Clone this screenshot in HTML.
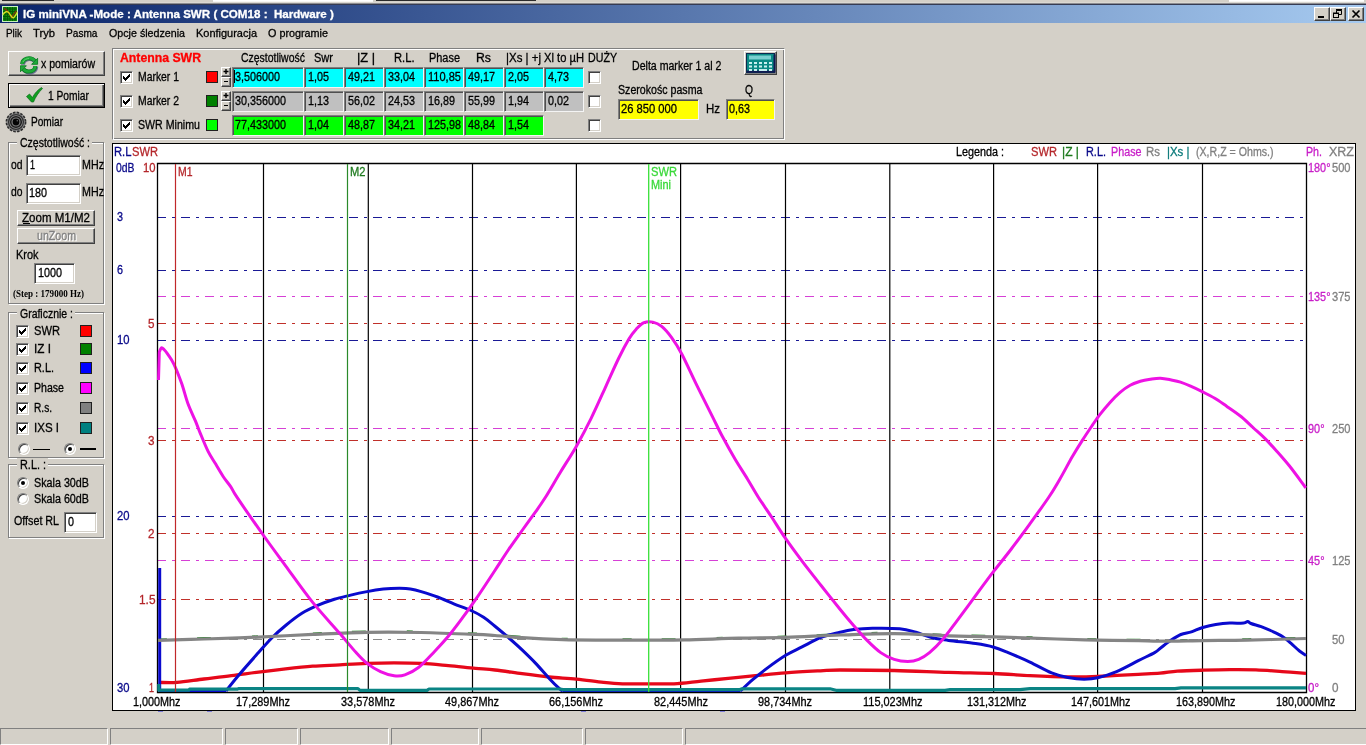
<!DOCTYPE html>
<html lang="pl"><head><meta charset="utf-8"><title>IG miniVNA -Mode : Antenna SWR</title>
<style>
*{box-sizing:border-box;margin:0;padding:0}
html,body{width:1366px;height:745px;overflow:hidden;background:#d4d0c8}
body{font-family:"Liberation Sans",sans-serif;font-size:12.5px;position:relative}
#app{position:absolute;left:0;top:0;width:1366px;height:745px;background:#d4d0c8;overflow:hidden;will-change:transform}
#app div,#app span,#app svg{position:absolute}
.t{white-space:pre;transform-origin:0 50%;display:block;-webkit-text-stroke:.3px}
.b{font-weight:bold}
.sf{font-family:"Liberation Serif",serif}
.title{left:0;top:5px;width:1366px;height:18px;background:linear-gradient(90deg,#0a246a,#a6caf0)}
.cap{background:#d4d0c8;border:1px solid;border-color:#fff #404040 #404040 #fff;box-shadow:inset -1px -1px 0 #808080}
.btn{background:#d4d0c8;border:1px solid;border-color:#fff #404040 #404040 #fff;box-shadow:inset -1px -1px 0 #808080,inset 1px 1px 0 #d4d0c8}
.btnd{background:#d4d0c8;border:1px solid #000;box-shadow:inset 1px 1px 0 #fff,inset -1px -1px 0 #404040,inset -2px -2px 0 #808080}
.sunk{border:1px solid;border-color:#808080 #fff #fff #808080;box-shadow:inset 1px 1px 0 #404040,inset -1px -1px 0 #d4d0c8}
.fld{border:1px solid;border-color:#808080 #f4f4f4 #f4f4f4 #808080;box-shadow:inset 1px 1px 0 #505050}
.grp{border:1px solid #808080;box-shadow:1px 1px 0 #fff,inset 1px 1px 0 #fff}
.etch{border:1px solid;border-color:#808080 #fff #fff #808080;box-shadow:inset 1px 1px 0 #fff,inset -1px -1px 0 #808080}
.glab{background:#d4d0c8;height:12px}
.sq{border:1px solid #202020}
.chk{background:#fff;border:1px solid;border-color:#808080 #fff #fff #808080;box-shadow:inset 1px 1px 0 #404040,inset -1px -1px 0 #d4d0c8}
.rad{border-radius:50%;background:#fff;border:1px solid;border-color:#808080 #fff #fff #808080;box-shadow:inset 1px 1px 0 #404040,inset -1px -1px 0 #d4d0c8}
.dot{border-radius:50%;background:#000}
.sb{border:1px solid;border-color:#808080 #fff #fff #808080}
</style></head>
<body><div id="app">
<div class="" style="left:2px;top:0px;width:52px;height:1px;background:#2b2b2b"></div>
<div class="" style="left:213px;top:0px;width:160px;height:2px;background:linear-gradient(#fff 60%,#e8e6e0)"></div>
<div class="" style="left:376px;top:0px;width:160px;height:1px;background:#2b2b2b"></div>
<div class="" style="left:1229px;top:0px;width:135px;height:2px;background:linear-gradient(#fff 60%,#e8e6e0)"></div>
<div class="" style="left:0px;top:2px;width:1366px;height:1px;background:#dbd8d2"></div>
<div class="" style="left:0px;top:3px;width:1366px;height:1px;background:#8c8c90"></div>
<div class="" style="left:0px;top:4px;width:1366px;height:1px;background:#363b52"></div>
<div class="title"><svg style="left:2px;top:1px" width="16" height="16" viewBox="0 0 16 16"><rect width="16" height="16" fill="#109410"/><path d="M3 1v14M5.500 1v14M8 1v14M10.500 1v14M13 1v14M1 3h14M1 5.500h14M1 8h14M1 10.500h14M1 13h14" stroke="#045a04" stroke-width="1.100"/><rect x=".5" y=".5" width="15" height="15" fill="none" stroke="#c8f0c0"/><path d="M2 2.500C5 3.500 7.500 7.500 9.500 11.500C11 9 12.500 6.500 14.500 5" fill="none" stroke="#7a3a0a" stroke-width="1.500"/><path d="M.8 8.800C2.500 5.500 5.500 4.300 7.500 7.500S10 12.200 11.500 11.800S14.500 7 15.500 6.200" fill="none" stroke="#d8e020" stroke-width="1.400"/></svg></div>
<span class="t b" style="left:22.5px;top:7.02px;font-size:11.5px;line-height:14px;color:#fff;transform:scaleX(1.008);">IG miniVNA -Mode : Antenna SWR ( COM18 :  Hardware )</span>
<div class="cap" style="left:1314px;top:7px;width:16px;height:14px;"><svg width="14" height="12" style="left:0;top:0"><rect x="3" y="8" width="6" height="2" fill="#000"/></svg></div>
<div class="cap" style="left:1330px;top:7px;width:16px;height:14px;"><svg width="14" height="12" style="left:0;top:0"><path d="M5.5 2.5h5v4h-5zM5 2h6" fill="none" stroke="#000" stroke-width="1"/><path d="M5 1.5h6" stroke="#000" stroke-width="1"/><rect x="2.500" y="5.500" width="5" height="4" fill="#d4d0c8" stroke="#000"/><path d="M2 5h6" stroke="#000"/></svg></div>
<div class="cap" style="left:1348px;top:7px;width:16px;height:14px;"><svg width="14" height="12" style="left:0;top:0"><path d="M3.500 2.500l7 7M10.500 2.500l-7 7" stroke="#000" stroke-width="1.700"/></svg></div>
<span class="t" style="left:5.5px;top:26.02px;font-size:11.5px;line-height:14px;color:#000;transform:scaleX(0.863);">Plik</span>
<span class="t" style="left:32.5px;top:26.02px;font-size:11.5px;line-height:14px;color:#000;transform:scaleX(0.974);">Tryb</span>
<span class="t" style="left:66.0px;top:26.02px;font-size:11.5px;line-height:14px;color:#000;transform:scaleX(0.880);">Pasma</span>
<span class="t" style="left:108.5px;top:26.02px;font-size:11.5px;line-height:14px;color:#000;transform:scaleX(0.929);">Opcje śledzenia</span>
<span class="t" style="left:195.5px;top:26.02px;font-size:11.5px;line-height:14px;color:#000;transform:scaleX(0.954);">Konfiguracja</span>
<span class="t" style="left:267.5px;top:26.02px;font-size:11.5px;line-height:14px;color:#000;transform:scaleX(0.939);">O programie</span>
<div class="btn" style="left:8px;top:51px;width:97px;height:25px;"></div>
<svg style="left:19.500px;top:55.500px" width="19" height="19" viewBox="0 0 19 19"><g fill="none" stroke-linecap="butt" stroke-linejoin="round"><g transform="translate(.8 .8)" stroke="#1a2a6a" opacity=".55" stroke-width="4.200"><path d="M2.200 8C2.200 3.800 6 2.200 9 2.200C11.500 2.200 13.500 3.200 14.500 4.800"/><path d="M15.300 10C15.300 14.200 11.500 15.500 8.800 15.500C6.300 15.500 4.400 14.600 3.300 13"/></g><path d="M2.200 8C2.200 3.800 6 2.200 9 2.200C11.500 2.200 13.500 3.200 14.500 4.800" stroke="#0c7a22" stroke-width="4"/><path d="M15.300 10C15.300 14.200 11.500 15.500 8.800 15.500C6.300 15.500 4.400 14.600 3.300 13" stroke="#0c7a22" stroke-width="4"/><path d="M2.200 8C2.200 3.800 6 2.200 9 2.200C11.500 2.200 13.500 3.200 14.500 4.800" stroke="#1eaa3a" stroke-width="2.700"/><path d="M15.300 10C15.300 14.200 11.500 15.500 8.800 15.500C6.300 15.500 4.400 14.600 3.300 13" stroke="#1eaa3a" stroke-width="2.700"/></g><path d="M17.600 2.300v6h-6z" fill="#1eaa3a" stroke="#0c7a22" stroke-width=".9"/><path d="M.4 15.800v-6h6z" fill="#1eaa3a" stroke="#0c7a22" stroke-width=".9"/><path d="M3 6C3.800 3.600 6.500 2.600 9 2.600" fill="none" stroke="#5ad86a" stroke-width="1"/></svg>
<span class="t" style="left:41.0px;top:56.67px;font-size:12.5px;line-height:14px;color:#000;transform:scaleX(0.845);">x pomiarów</span>
<div class="btnd" style="left:8px;top:83px;width:97px;height:25px;"></div>
<svg style="left:25px;top:86px" width="20" height="18" viewBox="0 0 20 18"><path d="M1.500 10.500l3-2.500 3 3.500c2-4 5-7.500 9-10l1 1c-4 4-7 8.500-9 13.500h-2z" fill="#10a020" stroke="#0a6a18" stroke-width=".7"/></svg>
<span class="t" style="left:47.5px;top:88.67px;font-size:12.5px;line-height:14px;color:#000;transform:scaleX(0.819);">1 Pomiar</span>
<svg style="left:5px;top:111px" width="22" height="22" viewBox="0 0 22 22"><circle cx="11" cy="11" r="9.600" fill="#8c8c8c" stroke="#2c2c2c" stroke-width="1.600" stroke-dasharray="2.600 1.200"/><circle cx="11" cy="11" r="7.400" fill="#909090" stroke="#303030" stroke-width="1.300"/><circle cx="11" cy="11" r="5.300" fill="#808080" stroke="#1c1c1c" stroke-width="1.500"/><circle cx="11" cy="11" r="3.400" fill="#050505"/><circle cx="12.300" cy="9.800" r=".8" fill="#666"/></svg>
<span class="t" style="left:30.5px;top:114.67px;font-size:12.5px;line-height:14px;color:#000;transform:scaleX(0.808);">Pomiar</span>
<div class="grp" style="left:8px;top:142px;width:96px;height:162px;"></div><div class="glab" style="left:17px;top:136px;width:75px;height:12px;"></div><span class="t" style="left:19.5px;top:135.67px;font-size:12.5px;line-height:14px;color:#000;transform:scaleX(0.840);">Częstotliwość :</span>
<span class="t" style="left:10.8px;top:157.67px;font-size:12.5px;line-height:14px;color:#000;transform:scaleX(0.827);">od</span>
<div class="sunk" style="left:26px;top:155px;width:55px;height:21px;background:#fff"></div>
<span class="t" style="left:29.5px;top:158.17px;font-size:12.5px;line-height:14px;color:#000;transform:scaleX(0.719);">1</span>
<span class="t" style="left:81.5px;top:157.67px;font-size:12.5px;line-height:14px;color:#000;transform:scaleX(0.856);">MHz</span>
<span class="t" style="left:10.8px;top:185.17px;font-size:12.5px;line-height:14px;color:#000;transform:scaleX(0.827);">do</span>
<div class="sunk" style="left:26px;top:183px;width:55px;height:21px;background:#fff"></div>
<span class="t" style="left:28.5px;top:185.67px;font-size:12.5px;line-height:14px;color:#000;transform:scaleX(0.863);">180</span>
<span class="t" style="left:81.5px;top:185.17px;font-size:12.5px;line-height:14px;color:#000;transform:scaleX(0.856);">MHz</span>
<div class="btn" style="left:17px;top:210px;width:78px;height:16px;"></div>
<span class="t" style="left:22.0px;top:211.17px;font-size:12.5px;line-height:14px;color:#000;transform:scaleX(0.923);">Zoom M1/M2</span>
<div class="" style="left:23px;top:223px;width:7px;height:1px;background:#000"></div>
<div class="btn" style="left:17px;top:228px;width:78px;height:16px;"></div>
<span class="t" style="left:37.5px;top:229.67px;font-size:12.5px;line-height:14px;color:#fff;transform:scaleX(0.850);">unZoom</span>
<span class="t" style="left:36.5px;top:228.67px;font-size:12.5px;line-height:14px;color:#808080;transform:scaleX(0.850);">unZoom</span>
<span class="t" style="left:16.0px;top:248.17px;font-size:12.5px;line-height:14px;color:#000;transform:scaleX(0.875);">Krok</span>
<div class="sunk" style="left:34px;top:263px;width:41px;height:21px;background:#fff"></div>
<span class="t" style="left:37.5px;top:265.67px;font-size:12.5px;line-height:14px;color:#000;transform:scaleX(0.863);">1000</span>
<span class="t b sf" style="left:12.5px;top:287.62px;font-size:10px;line-height:12px;color:#000;transform:scaleX(0.903);-webkit-text-stroke:0;">(Step : 179000 Hz)</span>
<div class="grp" style="left:8px;top:312px;width:96px;height:146px;"></div><div class="glab" style="left:17px;top:306px;width:58px;height:12px;"></div><span class="t" style="left:19.5px;top:306.67px;font-size:12.5px;line-height:14px;color:#000;transform:scaleX(0.838);">Graficznie :</span>
<div class="chk" style="left:16px;top:325px;width:13px;height:13px;"><svg width="13" height="13" style="left:-1px;top:-1px" shape-rendering="crispEdges"><path d="M3 5h1v3h-1zM4 6h1v3h-1zM5 7h1v3h-1zM6 6h1v3h-1zM7 5h1v3h-1zM8 4h1v3h-1zM9 3h1v3h-1z" fill="#000"/></svg></div>
<span class="t" style="left:34.0px;top:324.17px;font-size:12.5px;line-height:14px;color:#000;transform:scaleX(0.891);">SWR</span>
<div class="sq" style="left:80px;top:325px;width:12px;height:12px;background:#ff0000"></div>
<div class="chk" style="left:16px;top:342.5px;width:13px;height:13px;"><svg width="13" height="13" style="left:-1px;top:-1px" shape-rendering="crispEdges"><path d="M3 5h1v3h-1zM4 6h1v3h-1zM5 7h1v3h-1zM6 6h1v3h-1zM7 5h1v3h-1zM8 4h1v3h-1zM9 3h1v3h-1z" fill="#000"/></svg></div>
<span class="t" style="left:34.0px;top:341.67px;font-size:12.5px;line-height:14px;color:#000;transform:scaleX(0.941);">IZ I</span>
<div class="sq" style="left:80px;top:342.5px;width:12px;height:12px;background:#008000"></div>
<div class="chk" style="left:16px;top:362px;width:13px;height:13px;"><svg width="13" height="13" style="left:-1px;top:-1px" shape-rendering="crispEdges"><path d="M3 5h1v3h-1zM4 6h1v3h-1zM5 7h1v3h-1zM6 6h1v3h-1zM7 5h1v3h-1zM8 4h1v3h-1zM9 3h1v3h-1z" fill="#000"/></svg></div>
<span class="t" style="left:34.0px;top:361.17px;font-size:12.5px;line-height:14px;color:#000;transform:scaleX(0.872);">R.L.</span>
<div class="sq" style="left:80px;top:362px;width:12px;height:12px;background:#0000ff"></div>
<div class="chk" style="left:16px;top:382px;width:13px;height:13px;"><svg width="13" height="13" style="left:-1px;top:-1px" shape-rendering="crispEdges"><path d="M3 5h1v3h-1zM4 6h1v3h-1zM5 7h1v3h-1zM6 6h1v3h-1zM7 5h1v3h-1zM8 4h1v3h-1zM9 3h1v3h-1z" fill="#000"/></svg></div>
<span class="t" style="left:34.0px;top:381.17px;font-size:12.5px;line-height:14px;color:#000;transform:scaleX(0.846);">Phase</span>
<div class="sq" style="left:80px;top:382px;width:12px;height:12px;background:#ff00ff"></div>
<div class="chk" style="left:16px;top:402px;width:13px;height:13px;"><svg width="13" height="13" style="left:-1px;top:-1px" shape-rendering="crispEdges"><path d="M3 5h1v3h-1zM4 6h1v3h-1zM5 7h1v3h-1zM6 6h1v3h-1zM7 5h1v3h-1zM8 4h1v3h-1zM9 3h1v3h-1z" fill="#000"/></svg></div>
<span class="t" style="left:34.0px;top:401.17px;font-size:12.5px;line-height:14px;color:#000;transform:scaleX(0.810);">R.s.</span>
<div class="sq" style="left:80px;top:402px;width:12px;height:12px;background:#808080"></div>
<div class="chk" style="left:16px;top:422px;width:13px;height:13px;"><svg width="13" height="13" style="left:-1px;top:-1px" shape-rendering="crispEdges"><path d="M3 5h1v3h-1zM4 6h1v3h-1zM5 7h1v3h-1zM6 6h1v3h-1zM7 5h1v3h-1zM8 4h1v3h-1zM9 3h1v3h-1z" fill="#000"/></svg></div>
<span class="t" style="left:34.0px;top:421.17px;font-size:12.5px;line-height:14px;color:#000;transform:scaleX(0.923);">IXS I</span>
<div class="sq" style="left:80px;top:422px;width:12px;height:12px;background:#008080"></div>
<div class="rad" style="left:18px;top:443px;width:12px;height:12px;"></div>
<div class="" style="left:33px;top:448.5px;width:17px;height:1px;background:#000"></div>
<div class="rad" style="left:64px;top:443px;width:12px;height:12px;"><div class="dot" style="left:3px;top:3px;width:4px;height:4px"></div></div>
<div class="" style="left:80px;top:448px;width:16px;height:2px;background:#000"></div>
<div class="grp" style="left:8px;top:464px;width:96px;height:74px;"></div><div class="glab" style="left:17px;top:458px;width:31px;height:12px;"></div><span class="t" style="left:19.5px;top:458.17px;font-size:12.5px;line-height:14px;color:#000;transform:scaleX(0.870);">R.L. :</span>
<div class="rad" style="left:17px;top:477px;width:12px;height:12px;"><div class="dot" style="left:3px;top:3px;width:4px;height:4px"></div></div>
<span class="t" style="left:34.0px;top:476.17px;font-size:12.5px;line-height:14px;color:#000;transform:scaleX(0.860);">Skala 30dB</span>
<div class="rad" style="left:17px;top:493px;width:12px;height:12px;"></div>
<span class="t" style="left:34.0px;top:492.17px;font-size:12.5px;line-height:14px;color:#000;transform:scaleX(0.860);">Skala 60dB</span>
<span class="t" style="left:13.5px;top:514.17px;font-size:12.5px;line-height:14px;color:#000;transform:scaleX(0.856);">Offset RL</span>
<div class="sunk" style="left:64px;top:512px;width:33px;height:21px;background:#fff"></div>
<span class="t" style="left:67.5px;top:515.17px;font-size:12.5px;line-height:14px;color:#000;transform:scaleX(0.863);">0</span>
<div class="etch" style="left:112px;top:48px;width:673px;height:92px;"></div>
<span class="t b" style="left:119.5px;top:50.84px;font-size:12px;line-height:14px;color:#ff0000;transform:scaleX(1.021);">Antenna SWR</span>
<span class="t" style="left:240.5px;top:50.67px;font-size:12.5px;line-height:14px;color:#000;transform:scaleX(0.837);">Częstotliwość</span>
<span class="t" style="left:313.5px;top:50.67px;font-size:12.5px;line-height:14px;color:#000;transform:scaleX(0.882);">Swr</span>
<span class="t" style="left:356.5px;top:50.67px;font-size:12.5px;line-height:14px;color:#000;transform:scaleX(1.022);">|Z |</span>
<span class="t" style="left:393.5px;top:50.67px;font-size:12.5px;line-height:14px;color:#000;transform:scaleX(0.894);">R.L.</span>
<span class="t" style="left:429.0px;top:50.67px;font-size:12.5px;line-height:14px;color:#000;transform:scaleX(0.874);">Phase</span>
<span class="t" style="left:475.5px;top:50.67px;font-size:12.5px;line-height:14px;color:#000;transform:scaleX(0.982);">Rs</span>
<span class="t" style="left:505.5px;top:50.67px;font-size:12.5px;line-height:14px;color:#000;transform:scaleX(0.918);">|Xs | +j</span>
<span class="t" style="left:543.5px;top:50.67px;font-size:12.5px;line-height:14px;color:#000;transform:scaleX(0.894);">Xl to µH</span>
<span class="t" style="left:587.5px;top:50.67px;font-size:12.5px;line-height:14px;color:#000;transform:scaleX(0.852);">DUŻY</span>
<div class="chk" style="left:120px;top:71px;width:13px;height:13px;"><svg width="13" height="13" style="left:-1px;top:-1px" shape-rendering="crispEdges"><path d="M3 5h1v3h-1zM4 6h1v3h-1zM5 7h1v3h-1zM6 6h1v3h-1zM7 5h1v3h-1zM8 4h1v3h-1zM9 3h1v3h-1z" fill="#000"/></svg></div>
<span class="t" style="left:138.0px;top:69.67px;font-size:12.5px;line-height:14px;color:#000;transform:scaleX(0.831);">Marker 1</span>
<div class="sq" style="left:206px;top:71px;width:12px;height:12px;background:#ff0000"></div>
<div class="btn" style="left:221px;top:67px;width:10px;height:10px;"><svg width="8" height="8" style="left:0;top:0"><path d="M1.500 3.500h5M4 1v5" stroke="#000" stroke-width="1.400"/></svg></div>
<div class="btn" style="left:221px;top:77px;width:10px;height:10px;"><svg width="8" height="8" style="left:0;top:0"><path d="M2 3.500h4" stroke="#000" stroke-width="1"/></svg></div>
<div class="fld" style="left:232px;top:67px;width:72px;height:21px;background:#00ffff"></div>
<span class="t" style="left:234.5px;top:69.67px;font-size:12.5px;line-height:14px;color:#000;transform:scaleX(0.863);">3,506000</span>
<div class="fld" style="left:304px;top:67px;width:40px;height:21px;background:#00ffff"></div>
<span class="t" style="left:307.5px;top:69.67px;font-size:12.5px;line-height:14px;color:#000;transform:scaleX(0.863);">1,05</span>
<div class="fld" style="left:344px;top:67px;width:40px;height:21px;background:#00ffff"></div>
<span class="t" style="left:347.5px;top:69.67px;font-size:12.5px;line-height:14px;color:#000;transform:scaleX(0.863);">49,21</span>
<div class="fld" style="left:384px;top:67px;width:40px;height:21px;background:#00ffff"></div>
<span class="t" style="left:387.5px;top:69.67px;font-size:12.5px;line-height:14px;color:#000;transform:scaleX(0.863);">33,04</span>
<div class="fld" style="left:424px;top:67px;width:40px;height:21px;background:#00ffff"></div>
<span class="t" style="left:427.5px;top:69.67px;font-size:12.5px;line-height:14px;color:#000;transform:scaleX(0.884);">110,85</span>
<div class="fld" style="left:464px;top:67px;width:40px;height:21px;background:#00ffff"></div>
<span class="t" style="left:467.5px;top:69.67px;font-size:12.5px;line-height:14px;color:#000;transform:scaleX(0.863);">49,17</span>
<div class="fld" style="left:504px;top:67px;width:40px;height:21px;background:#00ffff"></div>
<span class="t" style="left:507.5px;top:69.67px;font-size:12.5px;line-height:14px;color:#000;transform:scaleX(0.863);">2,05</span>
<div class="fld" style="left:544px;top:67px;width:40px;height:21px;background:#00ffff"></div>
<span class="t" style="left:547.5px;top:69.67px;font-size:12.5px;line-height:14px;color:#000;transform:scaleX(0.863);">4,73</span>
<div class="chk" style="left:588px;top:71px;width:13px;height:13px;"></div>
<div class="chk" style="left:120px;top:95px;width:13px;height:13px;"><svg width="13" height="13" style="left:-1px;top:-1px" shape-rendering="crispEdges"><path d="M3 5h1v3h-1zM4 6h1v3h-1zM5 7h1v3h-1zM6 6h1v3h-1zM7 5h1v3h-1zM8 4h1v3h-1zM9 3h1v3h-1z" fill="#000"/></svg></div>
<span class="t" style="left:138.0px;top:93.67px;font-size:12.5px;line-height:14px;color:#000;transform:scaleX(0.831);">Marker 2</span>
<div class="sq" style="left:206px;top:95px;width:12px;height:12px;background:#008000"></div>
<div class="btn" style="left:221px;top:91px;width:10px;height:10px;"><svg width="8" height="8" style="left:0;top:0"><path d="M1.500 3.500h5M4 1v5" stroke="#000" stroke-width="1.400"/></svg></div>
<div class="btn" style="left:221px;top:101px;width:10px;height:10px;"><svg width="8" height="8" style="left:0;top:0"><path d="M2 3.500h4" stroke="#000" stroke-width="1"/></svg></div>
<div class="fld" style="left:232px;top:91px;width:72px;height:21px;background:#c0c0c0"></div>
<span class="t" style="left:234.5px;top:93.67px;font-size:12.5px;line-height:14px;color:#000;transform:scaleX(0.863);">30,356000</span>
<div class="fld" style="left:304px;top:91px;width:40px;height:21px;background:#c0c0c0"></div>
<span class="t" style="left:307.5px;top:93.67px;font-size:12.5px;line-height:14px;color:#000;transform:scaleX(0.863);">1,13</span>
<div class="fld" style="left:344px;top:91px;width:40px;height:21px;background:#c0c0c0"></div>
<span class="t" style="left:347.5px;top:93.67px;font-size:12.5px;line-height:14px;color:#000;transform:scaleX(0.863);">56,02</span>
<div class="fld" style="left:384px;top:91px;width:40px;height:21px;background:#c0c0c0"></div>
<span class="t" style="left:387.5px;top:93.67px;font-size:12.5px;line-height:14px;color:#000;transform:scaleX(0.863);">24,53</span>
<div class="fld" style="left:424px;top:91px;width:40px;height:21px;background:#c0c0c0"></div>
<span class="t" style="left:427.5px;top:93.67px;font-size:12.5px;line-height:14px;color:#000;transform:scaleX(0.863);">16,89</span>
<div class="fld" style="left:464px;top:91px;width:40px;height:21px;background:#c0c0c0"></div>
<span class="t" style="left:467.5px;top:93.67px;font-size:12.5px;line-height:14px;color:#000;transform:scaleX(0.863);">55,99</span>
<div class="fld" style="left:504px;top:91px;width:40px;height:21px;background:#c0c0c0"></div>
<span class="t" style="left:507.5px;top:93.67px;font-size:12.5px;line-height:14px;color:#000;transform:scaleX(0.863);">1,94</span>
<div class="fld" style="left:544px;top:91px;width:40px;height:21px;background:#c0c0c0"></div>
<span class="t" style="left:547.5px;top:93.67px;font-size:12.5px;line-height:14px;color:#000;transform:scaleX(0.863);">0,02</span>
<div class="chk" style="left:588px;top:95px;width:13px;height:13px;"></div>
<div class="chk" style="left:120px;top:119px;width:13px;height:13px;"><svg width="13" height="13" style="left:-1px;top:-1px" shape-rendering="crispEdges"><path d="M3 5h1v3h-1zM4 6h1v3h-1zM5 7h1v3h-1zM6 6h1v3h-1zM7 5h1v3h-1zM8 4h1v3h-1zM9 3h1v3h-1z" fill="#000"/></svg></div>
<span class="t" style="left:138.0px;top:117.67px;font-size:12.5px;line-height:14px;color:#000;transform:scaleX(0.850);">SWR Minimu</span>
<div class="sq" style="left:206px;top:119px;width:12px;height:12px;background:#00ff00"></div>
<div class="fld" style="left:232px;top:115px;width:72px;height:21px;background:#00ff00"></div>
<span class="t" style="left:234.5px;top:117.67px;font-size:12.5px;line-height:14px;color:#000;transform:scaleX(0.863);">77,433000</span>
<div class="fld" style="left:304px;top:115px;width:40px;height:21px;background:#00ff00"></div>
<span class="t" style="left:307.5px;top:117.67px;font-size:12.5px;line-height:14px;color:#000;transform:scaleX(0.863);">1,04</span>
<div class="fld" style="left:344px;top:115px;width:40px;height:21px;background:#00ff00"></div>
<span class="t" style="left:347.5px;top:117.67px;font-size:12.5px;line-height:14px;color:#000;transform:scaleX(0.863);">48,87</span>
<div class="fld" style="left:384px;top:115px;width:40px;height:21px;background:#00ff00"></div>
<span class="t" style="left:387.5px;top:117.67px;font-size:12.5px;line-height:14px;color:#000;transform:scaleX(0.863);">34,21</span>
<div class="fld" style="left:424px;top:115px;width:40px;height:21px;background:#00ff00"></div>
<span class="t" style="left:427.5px;top:117.67px;font-size:12.5px;line-height:14px;color:#000;transform:scaleX(0.863);">125,98</span>
<div class="fld" style="left:464px;top:115px;width:40px;height:21px;background:#00ff00"></div>
<span class="t" style="left:467.5px;top:117.67px;font-size:12.5px;line-height:14px;color:#000;transform:scaleX(0.863);">48,84</span>
<div class="fld" style="left:504px;top:115px;width:40px;height:21px;background:#00ff00"></div>
<span class="t" style="left:507.5px;top:117.67px;font-size:12.5px;line-height:14px;color:#000;transform:scaleX(0.863);">1,54</span>
<div class="chk" style="left:588px;top:119px;width:13px;height:13px;"></div>
<div class="" style="left:234px;top:70px;width:1px;height:13px;background:#000"></div>
<span class="t" style="left:632.0px;top:58.67px;font-size:12.5px;line-height:14px;color:#000;transform:scaleX(0.847);">Delta marker 1 al 2</span>
<div class="btn" style="left:744px;top:51px;width:33px;height:24px;"><svg width="31" height="22" style="left:0;top:0" viewBox="0 0 31 22"><rect x="1.500" y="1.500" width="28" height="19" fill="#0a8a84" stroke="#0a2a50"/><path d="M2 19.500h27.500v-17" fill="none" stroke="#101850" stroke-width="2"/><rect x="4" y="3.500" width="22" height="4" fill="#7ad0d0"/><g fill="#c8f0f0"><rect x="4" y="10" width="3" height="2"/><rect x="9" y="10" width="3" height="2"/><rect x="14" y="10" width="3" height="2"/><rect x="19" y="10" width="3" height="2"/><rect x="24" y="10" width="3" height="2"/><rect x="4" y="13.500" width="3" height="2"/><rect x="9" y="13.500" width="3" height="2"/><rect x="14" y="13.500" width="3" height="2"/><rect x="19" y="13.500" width="3" height="2"/><rect x="24" y="13.500" width="3" height="2"/><rect x="4" y="17" width="3" height="2"/><rect x="9" y="17" width="3" height="2"/><rect x="14" y="17" width="8" height="2"/><rect x="24" y="17" width="3" height="2"/></g></svg></div>
<span class="t" style="left:618.0px;top:82.67px;font-size:12.5px;line-height:14px;color:#000;transform:scaleX(0.850);">Szerokośc pasma</span>
<span class="t" style="left:744.5px;top:82.67px;font-size:12.5px;line-height:14px;color:#000;transform:scaleX(0.822);">Q</span>
<div class="fld" style="left:618px;top:99px;width:81px;height:21px;background:#ffff00"></div>
<span class="t" style="left:620.5px;top:101.67px;font-size:12.5px;line-height:14px;color:#000;transform:scaleX(0.895);">26 850 000</span>
<span class="t" style="left:705.5px;top:101.67px;font-size:12.5px;line-height:14px;color:#000;transform:scaleX(0.916);">Hz</span>
<div class="fld" style="left:726px;top:99px;width:49px;height:21px;background:#ffff00"></div>
<span class="t" style="left:728.5px;top:101.67px;font-size:12.5px;line-height:14px;color:#000;transform:scaleX(0.863);">0,63</span>
<div class="sb" style="left:0px;top:728px;width:108px;height:17px;"></div>
<div class="sb" style="left:110px;top:728px;width:113px;height:17px;"></div>
<div class="sb" style="left:225px;top:728px;width:73px;height:17px;"></div>
<div class="sb" style="left:300px;top:728px;width:89px;height:17px;"></div>
<div class="sb" style="left:391px;top:728px;width:88px;height:17px;"></div>
<div class="sb" style="left:481px;top:728px;width:102px;height:17px;"></div>
<div class="sb" style="left:585px;top:728px;width:98px;height:17px;"></div>
<div class="sb" style="left:685px;top:728px;width:682px;height:17px;"></div>
<div style="left:112px;top:143px;width:1244px;height:568px;background:#fff;border:1px solid;border-color:#000 #000 #000 #000"></div>
<svg style="left:0;top:0" width="1366" height="745" viewBox="0 0 1366 745" shape-rendering="auto"><path d="M157 217.5H1306" stroke="#1a1a96" stroke-width="1" stroke-dasharray="9 6 3 6" fill="none" shape-rendering="crispEdges"/><path d="M157 270.5H1306" stroke="#1a1a96" stroke-width="1" stroke-dasharray="9 6 3 6" fill="none" shape-rendering="crispEdges"/><path d="M157 340.5H1306" stroke="#1a1a96" stroke-width="1" stroke-dasharray="9 6 3 6" fill="none" shape-rendering="crispEdges"/><path d="M157 516.5H1306" stroke="#1a1a96" stroke-width="1" stroke-dasharray="9 6 3 6" fill="none" shape-rendering="crispEdges"/><path d="M157 323.5H1306" stroke="#c0302a" stroke-width="1" stroke-dasharray="9 6 3 6" fill="none" shape-rendering="crispEdges"/><path d="M157 440.5H1306" stroke="#c0302a" stroke-width="1" stroke-dasharray="9 6 3 6" fill="none" shape-rendering="crispEdges"/><path d="M157 533.5H1306" stroke="#c0302a" stroke-width="1" stroke-dasharray="9 6 3 6" fill="none" shape-rendering="crispEdges"/><path d="M157 599.5H1306" stroke="#c0302a" stroke-width="1" stroke-dasharray="9 6 3 6" fill="none" shape-rendering="crispEdges"/><path d="M157 296.5H1306" stroke="#d640d6" stroke-width="1" stroke-dasharray="9 6 3 6" fill="none" shape-rendering="crispEdges"/><path d="M157 428.5H1306" stroke="#d640d6" stroke-width="1" stroke-dasharray="9 6 3 6" fill="none" shape-rendering="crispEdges"/><path d="M157 560.5H1306" stroke="#d640d6" stroke-width="1" stroke-dasharray="9 6 3 6" fill="none" shape-rendering="crispEdges"/><path d="M157 639.5H1306" stroke="#8a8a8a" stroke-width="1" stroke-dasharray="9 6 3 6" fill="none" shape-rendering="crispEdges"/><path d="M157.5 163.500H1306.500V692.500H157.500Z" fill="none" stroke="#000" stroke-width="1.300"/><path d="M263.5 164V692M368.3 164V692M472.5 164V692M576.4 164V692M680.6 164V692M785.5 164V692M889.8 164V692M993.6 164V692M1097.6 164V692M1202.5 164V692" stroke="#000" stroke-width="1.200" fill="none"/><path d="M159.0 682.4C162.0 682.4 169.5 683.0 177.0 682.4C184.5 681.8 194.9 680.1 204.0 679.0C213.1 677.9 222.3 676.9 231.4 675.7C240.5 674.6 249.5 673.2 258.5 672.1C267.5 671.0 276.6 669.9 285.6 668.9C294.6 667.9 303.6 666.9 312.7 666.2C321.8 665.5 330.8 665.3 339.9 664.8C348.9 664.3 358.0 663.7 367.0 663.4C376.0 663.1 385.0 662.9 394.0 662.9C403.0 662.9 412.1 662.9 421.2 663.4C430.2 663.9 439.2 664.8 448.3 665.6C457.4 666.4 467.7 667.6 475.5 668.3C483.3 669.0 487.2 669.1 495.0 670.0C502.8 670.9 513.1 672.5 522.1 673.7C531.1 674.9 540.2 676.1 549.2 677.0C558.2 677.9 567.4 678.3 576.4 679.2C585.4 680.1 595.8 681.6 603.5 682.4C611.2 683.2 615.0 683.6 622.5 683.8C630.0 684.0 640.2 683.8 648.8 683.8C657.4 683.8 665.3 684.2 674.0 683.8C682.7 683.3 692.1 682.0 701.1 681.1C710.1 680.2 719.2 679.3 728.2 678.4C737.2 677.5 745.8 676.6 755.4 675.7C765.0 674.8 774.9 673.7 785.7 672.9C796.6 672.1 811.5 671.3 820.5 670.8C829.5 670.3 827.7 670.0 840.0 670.0C852.3 670.0 876.1 670.1 894.2 670.5C912.3 670.9 931.9 671.9 948.5 672.4C965.1 672.9 980.2 673.0 993.8 673.5C1007.4 674.0 1017.1 675.1 1029.9 675.7C1042.7 676.3 1059.2 676.9 1070.5 677.0C1081.8 677.1 1086.4 677.0 1097.7 676.5C1109.0 676.0 1127.9 674.8 1138.3 674.3C1148.7 673.8 1153.5 673.7 1160.0 673.2C1166.5 672.7 1170.3 671.6 1177.4 671.1C1184.5 670.6 1194.0 670.4 1202.7 670.2C1211.4 670.0 1220.9 669.8 1229.8 669.7C1238.7 669.7 1247.3 669.6 1256.0 669.9C1264.7 670.2 1273.8 671.0 1282.1 671.6C1290.4 672.2 1302.0 673.1 1306.0 673.4" fill="none" stroke="#e6081a" stroke-width="3.300"/><path d="M158.0 639.5C165.7 639.3 187.2 638.6 204.0 638.1C220.8 637.6 240.4 637.0 258.5 636.2C276.6 635.4 294.6 634.3 312.7 633.5C330.8 632.7 348.9 631.7 367.0 631.4C385.1 631.1 402.9 631.2 421.0 631.6C439.1 632.0 463.2 633.0 475.5 633.5C487.8 634.0 487.2 634.0 495.0 634.6C502.8 635.2 510.7 636.1 522.0 636.8C533.3 637.5 549.2 638.3 562.8 638.7C576.4 639.1 589.2 639.1 603.5 639.2C617.8 639.3 635.2 639.2 648.8 639.2C662.4 639.2 669.9 639.3 684.9 639.0C699.9 638.7 722.2 637.7 739.0 637.3C755.8 636.9 768.9 637.0 785.7 636.5C802.5 636.0 822.0 634.7 840.0 634.1C858.0 633.5 875.9 632.6 894.0 632.7C912.1 632.8 931.9 634.4 948.5 634.9C965.1 635.4 975.7 635.5 993.8 636.0C1011.9 636.5 1039.7 637.6 1057.0 638.1C1074.3 638.6 1084.2 638.9 1097.7 639.2C1111.2 639.5 1127.9 639.6 1138.3 639.8C1148.7 640.0 1149.3 640.3 1160.0 640.3C1170.7 640.3 1188.2 639.9 1202.7 639.7C1217.2 639.5 1230.0 639.6 1247.2 639.2C1264.4 638.9 1296.2 637.9 1306.0 637.6" fill="none" stroke="#2a8a2a" stroke-width="2" stroke-dasharray="9 30 14 41 6 55"/><path d="M159.700 568V690.500H226" fill="none" stroke="#0a0ace" stroke-width="3" stroke-linejoin="round"/><path d="M226.0 691.0C228.2 688.2 234.1 680.7 239.5 674.3C244.9 667.9 253.1 658.7 258.5 652.6C263.9 646.5 267.5 642.2 272.0 637.7C276.5 633.2 280.6 629.6 285.6 625.5C290.6 621.4 296.5 616.7 301.9 613.3C307.3 609.9 312.8 607.5 318.2 605.1C323.6 602.8 329.0 600.9 334.4 599.2C339.8 597.5 345.3 596.4 350.7 595.1C356.1 593.8 361.6 592.6 367.0 591.6C372.4 590.6 377.9 589.7 383.3 589.1C388.7 588.5 395.0 588.3 399.5 588.3C404.0 588.3 406.8 588.3 410.4 588.9C414.0 589.5 416.7 590.2 421.2 591.6C425.7 593.0 432.1 595.0 437.5 597.0C442.9 599.0 448.4 601.6 453.8 603.8C459.2 606.0 465.0 607.8 470.0 610.0C475.0 612.2 479.5 614.6 483.6 617.3C487.7 620.0 490.5 622.6 494.7 626.0C498.9 629.4 504.0 633.7 508.6 637.7C513.2 641.7 517.6 645.6 522.1 649.9C526.6 654.2 531.2 658.6 535.7 663.4C540.2 668.1 545.2 674.1 549.2 678.4C553.2 682.7 557.7 687.1 560.0 689.2C562.3 691.3 562.5 690.7 563.0 691.0" fill="none" stroke="#0a0ace" stroke-width="3" stroke-linejoin="round"/><path d="M563 690.500H740.500" fill="none" stroke="#0a0ace" stroke-width="3" stroke-linejoin="round"/><path d="M740.5 691.0C742.5 689.1 748.4 683.4 752.7 679.7C757.0 676.0 760.7 673.0 766.2 668.9C771.7 664.8 779.8 658.9 785.7 655.3C791.6 651.7 795.7 650.1 801.5 647.2C807.3 644.3 814.1 640.2 820.5 637.7C826.9 635.2 834.5 633.7 840.0 632.3C845.5 630.9 848.2 630.2 853.6 629.5C859.0 628.8 864.8 628.3 872.5 628.2C880.2 628.1 892.5 628.0 899.7 628.7C906.9 629.4 910.5 630.8 915.9 632.3C921.3 633.8 926.8 636.4 932.2 637.7C937.6 639.1 941.3 639.4 948.5 640.4C955.7 641.4 968.1 642.5 975.6 643.6C983.1 644.7 988.4 645.7 993.8 647.2C999.2 648.7 1002.2 650.1 1008.2 652.6C1014.2 655.1 1022.7 658.7 1029.9 662.1C1037.1 665.5 1045.3 670.3 1051.6 672.9C1057.9 675.5 1062.4 676.5 1067.8 677.5C1073.2 678.5 1079.1 679.2 1084.1 679.2C1089.1 679.2 1092.3 679.1 1097.7 677.8C1103.1 676.5 1109.8 674.5 1116.6 671.6C1123.4 668.8 1132.0 663.9 1138.3 660.7C1144.6 657.5 1151.0 654.6 1154.6 652.6C1158.2 650.6 1157.3 650.5 1160.0 648.5C1162.7 646.5 1167.0 642.9 1170.5 640.6C1174.0 638.3 1177.4 636.0 1180.9 634.5C1184.4 633.0 1187.8 633.1 1191.4 631.9C1195.0 630.7 1198.6 628.7 1202.7 627.5C1206.8 626.3 1211.3 625.2 1215.8 624.5C1220.3 623.8 1225.1 623.3 1229.8 623.1C1234.5 622.9 1240.7 623.4 1243.7 623.1C1246.7 622.8 1246.5 621.3 1247.7 621.4C1248.9 621.5 1248.8 622.6 1251.0 623.5C1253.2 624.4 1257.8 625.4 1261.2 626.6C1264.6 627.9 1268.1 629.4 1271.6 631.0C1275.1 632.6 1278.9 634.2 1282.1 636.2C1285.3 638.2 1287.9 640.7 1290.8 643.2C1293.7 645.7 1297.0 649.0 1299.5 651.0C1302.0 653.0 1304.9 654.7 1306.0 655.4" fill="none" stroke="#0a0ace" stroke-width="3" stroke-linejoin="round"/><path d="M158.0 640.4C165.7 640.2 187.2 639.5 204.0 639.0C220.8 638.5 240.4 637.9 258.5 637.1C276.6 636.3 294.6 635.2 312.7 634.4C330.8 633.6 348.9 632.6 367.0 632.3C385.1 632.0 402.9 632.1 421.0 632.5C439.1 632.9 463.2 633.9 475.5 634.4C487.8 634.9 487.2 635.0 495.0 635.5C502.8 636.0 510.7 637.0 522.0 637.7C533.3 638.4 549.2 639.2 562.8 639.6C576.4 640.0 589.2 640.0 603.5 640.1C617.8 640.2 635.2 640.1 648.8 640.1C662.4 640.1 669.9 640.2 684.9 639.9C699.9 639.6 722.2 638.6 739.0 638.2C755.8 637.8 768.9 637.9 785.7 637.4C802.5 636.9 822.0 635.6 840.0 635.0C858.0 634.4 875.9 633.5 894.0 633.6C912.1 633.7 931.9 635.2 948.5 635.8C965.1 636.3 975.7 636.4 993.8 636.9C1011.9 637.4 1039.7 638.5 1057.0 639.0C1074.3 639.5 1084.2 639.8 1097.7 640.1C1111.2 640.4 1127.9 640.5 1138.3 640.7C1148.7 640.9 1149.3 641.2 1160.0 641.2C1170.7 641.2 1188.2 640.8 1202.7 640.6C1217.2 640.4 1230.0 640.5 1247.2 640.1C1264.4 639.8 1296.2 638.8 1306.0 638.5" fill="none" stroke="#858585" stroke-width="3.200"/><path d="M158.800 684V690.200H188.700L189.500 689.200H237.500L238.500 688.600H358L360 690.400H427L429 689H560L563 689.600H740L742 688.800H830L836 690.300H945L950 689.600H1020L1030 688.600H1175L1181 687.800H1306" fill="none" stroke="#0a8484" stroke-width="3.200" stroke-linejoin="round"/><path d="M158.500 380L159.300 352L159.3 352.0C159.7 351.3 160.6 348.3 161.4 347.9C162.2 347.5 162.9 348.4 164.0 349.5C165.1 350.6 166.0 351.7 167.7 354.2C169.4 356.7 171.7 359.4 174.0 364.3C176.3 369.2 179.3 376.8 181.6 383.3C183.9 389.8 185.6 397.2 187.9 403.5C190.2 409.8 193.4 416.1 195.5 421.1C197.6 426.2 198.4 428.8 200.5 433.8C202.6 438.9 205.6 446.3 208.1 451.4C210.6 456.4 213.2 459.9 215.7 464.1C218.2 468.3 220.8 472.9 223.3 476.7C225.8 480.5 228.5 483.4 230.8 486.8C233.1 490.2 231.6 489.2 237.1 497.4C242.6 505.6 255.8 524.6 263.9 536.0C272.0 547.4 277.5 554.7 285.6 565.8C293.7 576.9 303.6 591.1 312.7 602.4C321.8 613.7 332.7 625.2 339.9 633.6C347.1 642.0 351.6 647.6 356.1 652.6C360.6 657.6 362.9 660.2 367.0 663.4C371.1 666.6 376.0 669.5 380.5 671.6C385.0 673.7 390.0 675.2 394.1 675.7C398.2 676.2 400.8 676.2 404.9 674.8C409.0 673.4 413.5 671.4 418.5 667.5C423.5 663.6 429.8 656.4 434.8 651.2C439.8 646.0 443.8 641.7 448.3 636.3C452.8 630.9 457.4 624.8 461.9 618.7C466.4 612.6 470.1 607.6 475.5 599.7C480.9 591.8 488.9 579.6 494.4 571.2C499.9 562.8 504.0 556.3 508.6 549.5C513.2 542.7 517.6 536.8 522.1 530.5C526.6 524.2 531.8 517.1 535.7 511.6C539.6 506.1 541.1 504.1 545.3 497.5C549.5 490.9 555.5 480.2 560.7 471.7C565.9 463.2 571.2 455.2 576.3 446.4C581.3 437.5 586.0 428.7 591.0 418.6C596.0 408.5 601.5 395.9 606.1 385.8C610.7 375.7 615.0 365.8 618.8 358.0C622.6 350.2 626.0 343.9 628.9 339.0C631.8 334.1 633.9 331.6 636.4 328.9C638.9 326.2 641.2 323.7 644.0 322.6C646.8 321.5 649.9 321.5 652.9 322.1C655.9 322.7 658.6 323.8 661.7 326.4C664.9 329.0 668.4 333.2 671.8 337.8C675.2 342.4 677.7 346.2 681.9 354.2C686.1 362.2 692.0 375.5 697.1 385.8C702.2 396.1 708.0 407.7 712.2 416.1C716.4 424.5 718.5 429.2 722.3 436.3C726.1 443.4 730.8 451.9 735.0 459.0C739.2 466.1 743.7 472.8 747.6 479.2C751.5 485.6 754.5 491.2 758.5 497.5C762.5 503.8 767.1 510.1 771.6 517.0C776.1 523.9 780.7 531.5 785.7 538.7C790.7 545.9 795.7 552.7 801.5 560.4C807.3 568.1 814.1 576.7 820.5 584.8C826.9 592.9 834.5 602.4 840.0 609.2C845.5 616.0 849.1 620.3 853.6 625.5C858.1 630.7 862.6 635.9 867.1 640.4C871.6 644.9 876.2 649.4 880.7 652.6C885.2 655.8 889.7 657.9 894.2 659.4C898.7 660.9 903.7 661.5 907.8 661.5C911.9 661.5 915.1 660.9 918.7 659.4C922.3 657.9 925.4 656.0 929.5 652.6C933.6 649.2 938.6 644.2 943.1 639.0C947.6 633.8 951.2 628.6 956.6 621.4C962.0 614.2 969.4 604.0 975.6 595.6C981.8 587.2 987.9 578.9 993.8 571.2C999.7 563.5 1004.9 557.4 1010.9 549.5C1016.9 541.6 1023.6 532.5 1029.9 523.8C1036.2 515.1 1043.6 504.9 1048.6 497.5C1053.6 490.1 1055.8 486.0 1059.8 479.2C1063.8 472.4 1068.6 463.0 1072.4 456.5C1076.2 450.0 1079.1 445.4 1082.5 440.1C1085.9 434.8 1089.7 429.2 1092.6 424.9C1095.5 420.6 1097.1 418.1 1100.0 414.4C1102.9 410.6 1106.7 406.1 1110.0 402.4C1113.3 398.7 1116.7 395.2 1120.1 392.3C1123.5 389.4 1126.8 387.1 1130.2 385.2C1133.6 383.3 1137.0 382.2 1140.3 381.2C1143.6 380.2 1146.9 379.7 1150.3 379.2C1153.7 378.7 1157.0 378.1 1160.4 378.2C1163.8 378.3 1167.2 379.1 1170.5 379.8C1173.8 380.5 1177.2 381.1 1180.5 382.2C1183.8 383.3 1186.9 384.6 1190.6 386.2C1194.3 387.8 1198.7 389.9 1202.7 391.9C1206.7 393.9 1210.8 395.9 1214.8 398.3C1218.8 400.7 1222.5 403.4 1226.9 406.4C1231.3 409.4 1236.7 413.0 1241.0 416.5C1245.3 420.0 1249.0 423.8 1253.0 427.5C1257.0 431.2 1261.1 434.6 1265.1 438.6C1269.1 442.6 1273.2 447.2 1277.2 451.7C1281.2 456.2 1285.3 460.8 1289.3 465.8C1293.3 470.8 1298.7 478.2 1301.4 481.9C1304.2 485.6 1305.1 486.9 1305.8 487.9" fill="none" stroke="#ee12e4" stroke-width="3" stroke-linejoin="round"/><path d="M175.500 164V692" stroke="#c0282a" stroke-width="1.200"/><path d="M347.500 164V692" stroke="#2a8a2a" stroke-width="1.200"/><path d="M648.700 164V692" stroke="#38e038" stroke-width="1.300"/><path d="M158 711.500h5M207 711.500h5M581 711.500h5M720 711.500h5" stroke="#5a5ae0" stroke-width="1" opacity=".7"/></svg>
<span class="t" style="left:114.0px;top:144.67px;font-size:12.5px;line-height:14px;color:#0a0a8a;transform:scaleX(0.900);">R.L</span>
<span class="t" style="left:132.0px;top:144.67px;font-size:12.5px;line-height:14px;color:#b4262a;transform:scaleX(0.891);">SWR</span>
<span class="t" style="left:116.0px;top:160.67px;font-size:12.5px;line-height:14px;color:#0a0a8a;transform:scaleX(0.831);">0dB</span>
<span class="t" style="left:142.5px;top:160.67px;font-size:12.5px;line-height:14px;color:#b4262a;transform:scaleX(0.899);">10</span>
<span class="t" style="left:116.5px;top:209.67px;font-size:12.5px;line-height:14px;color:#0a0a8a;transform:scaleX(0.863);">3</span>
<span class="t" style="left:116.5px;top:262.67px;font-size:12.5px;line-height:14px;color:#0a0a8a;transform:scaleX(0.863);">6</span>
<span class="t" style="left:116.5px;top:332.67px;font-size:12.5px;line-height:14px;color:#0a0a8a;transform:scaleX(0.899);">10</span>
<span class="t" style="left:116.5px;top:508.67px;font-size:12.5px;line-height:14px;color:#0a0a8a;transform:scaleX(0.899);">20</span>
<span class="t" style="left:116.5px;top:680.67px;font-size:12.5px;line-height:14px;color:#0a0a8a;transform:scaleX(0.899);">30</span>
<span class="t" style="left:148.1px;top:316.67px;font-size:12.5px;line-height:14px;color:#b4262a;transform:scaleX(0.935);">5</span>
<span class="t" style="left:148.1px;top:433.67px;font-size:12.5px;line-height:14px;color:#b4262a;transform:scaleX(0.935);">3</span>
<span class="t" style="left:148.1px;top:526.67px;font-size:12.5px;line-height:14px;color:#b4262a;transform:scaleX(0.935);">2</span>
<span class="t" style="left:138.5px;top:592.67px;font-size:12.5px;line-height:14px;color:#b4262a;transform:scaleX(0.949);">1.5</span>
<span class="t" style="left:148.5px;top:680.67px;font-size:12.5px;line-height:14px;color:#b4262a;transform:scaleX(0.719);">1</span>
<span class="t" style="left:178.0px;top:164.67px;font-size:12.5px;line-height:14px;color:#b4262a;transform:scaleX(0.835);">M1</span>
<span class="t" style="left:350.0px;top:164.67px;font-size:12.5px;line-height:14px;color:#1e7a1e;transform:scaleX(0.892);">M2</span>
<span class="t" style="left:651.0px;top:164.67px;font-size:12.5px;line-height:14px;color:#38d838;transform:scaleX(0.891);">SWR</span>
<span class="t" style="left:651.0px;top:177.67px;font-size:12.5px;line-height:14px;color:#38d838;transform:scaleX(0.873);">Mini</span>
<span class="t" style="left:956.0px;top:144.67px;font-size:12.5px;line-height:14px;color:#000;transform:scaleX(0.863);">Legenda :</span>
<span class="t" style="left:1031.0px;top:144.67px;font-size:12.5px;line-height:14px;color:#b4262a;transform:scaleX(0.891);">SWR</span>
<span class="t" style="left:1061.5px;top:144.67px;font-size:12.5px;line-height:14px;color:#1e7a1e;transform:scaleX(0.965);">|Z |</span>
<span class="t" style="left:1086.0px;top:144.67px;font-size:12.5px;line-height:14px;color:#0a0a8a;transform:scaleX(0.872);">R.L.</span>
<span class="t" style="left:1111.0px;top:144.67px;font-size:12.5px;line-height:14px;color:#c81ec8;transform:scaleX(0.860);">Phase</span>
<span class="t" style="left:1146.0px;top:144.67px;font-size:12.5px;line-height:14px;color:#808080;transform:scaleX(0.916);">Rs</span>
<span class="t" style="left:1166.5px;top:144.67px;font-size:12.5px;line-height:14px;color:#0a7a7a;transform:scaleX(0.916);">|Xs |</span>
<span class="t" style="left:1195.5px;top:144.67px;font-size:12.5px;line-height:14px;color:#808080;transform:scaleX(0.849);">(X,R,Z = Ohms.)</span>
<span class="t" style="left:1306.0px;top:144.67px;font-size:12.5px;line-height:14px;color:#c81ec8;transform:scaleX(0.853);">Ph.</span>
<span class="t" style="left:1329.0px;top:144.67px;font-size:12.5px;line-height:14px;color:#808080;transform:scaleX(1.000);">XRZ</span>
<span class="t" style="left:1308.0px;top:160.67px;font-size:12.5px;line-height:14px;color:#c81ec8;transform:scaleX(0.870);">180°</span>
<span class="t" style="left:1331.5px;top:160.67px;font-size:12.5px;line-height:14px;color:#808080;transform:scaleX(0.887);">500</span>
<span class="t" style="left:1308.0px;top:289.67px;font-size:12.5px;line-height:14px;color:#c81ec8;transform:scaleX(0.870);">135°</span>
<span class="t" style="left:1331.5px;top:289.67px;font-size:12.5px;line-height:14px;color:#808080;transform:scaleX(0.887);">375</span>
<span class="t" style="left:1308.0px;top:421.67px;font-size:12.5px;line-height:14px;color:#c81ec8;transform:scaleX(0.873);">90°</span>
<span class="t" style="left:1331.5px;top:421.67px;font-size:12.5px;line-height:14px;color:#808080;transform:scaleX(0.887);">250</span>
<span class="t" style="left:1308.0px;top:553.67px;font-size:12.5px;line-height:14px;color:#c81ec8;transform:scaleX(0.873);">45°</span>
<span class="t" style="left:1331.5px;top:553.67px;font-size:12.5px;line-height:14px;color:#808080;transform:scaleX(0.887);">125</span>
<span class="t" style="left:1331.5px;top:632.67px;font-size:12.5px;line-height:14px;color:#808080;transform:scaleX(0.899);">50</span>
<span class="t" style="left:1308.0px;top:680.67px;font-size:12.5px;line-height:14px;color:#c81ec8;transform:scaleX(0.920);">0°</span>
<span class="t" style="left:1331.5px;top:680.67px;font-size:12.5px;line-height:14px;color:#808080;transform:scaleX(0.935);">0</span>
<span class="t" style="left:132.5px;top:694.67px;font-size:12.5px;line-height:14px;color:#000;transform:scaleX(0.865);">1,000Mhz</span>
<span class="t" style="left:236.2px;top:694.67px;font-size:12.5px;line-height:14px;color:#000;transform:scaleX(0.873);">17,289Mhz</span>
<span class="t" style="left:341.3px;top:694.67px;font-size:12.5px;line-height:14px;color:#000;transform:scaleX(0.873);">33,578Mhz</span>
<span class="t" style="left:445.2px;top:694.67px;font-size:12.5px;line-height:14px;color:#000;transform:scaleX(0.873);">49,867Mhz</span>
<span class="t" style="left:548.9px;top:694.67px;font-size:12.5px;line-height:14px;color:#000;transform:scaleX(0.873);">66,156Mhz</span>
<span class="t" style="left:654.0px;top:694.67px;font-size:12.5px;line-height:14px;color:#000;transform:scaleX(0.873);">82,445Mhz</span>
<span class="t" style="left:757.7px;top:694.67px;font-size:12.5px;line-height:14px;color:#000;transform:scaleX(0.873);">98,734Mhz</span>
<span class="t" style="left:863.1px;top:694.67px;font-size:12.5px;line-height:14px;color:#000;transform:scaleX(0.877);">115,023Mhz</span>
<span class="t" style="left:967.1px;top:694.67px;font-size:12.5px;line-height:14px;color:#000;transform:scaleX(0.865);">131,312Mhz</span>
<span class="t" style="left:1071.1px;top:694.67px;font-size:12.5px;line-height:14px;color:#000;transform:scaleX(0.865);">147,601Mhz</span>
<span class="t" style="left:1176.1px;top:694.67px;font-size:12.5px;line-height:14px;color:#000;transform:scaleX(0.865);">163,890Mhz</span>
<span class="t" style="left:1276.0px;top:694.67px;font-size:12.5px;line-height:14px;color:#000;transform:scaleX(0.865);">180,000Mhz</span>
</div></body></html>
